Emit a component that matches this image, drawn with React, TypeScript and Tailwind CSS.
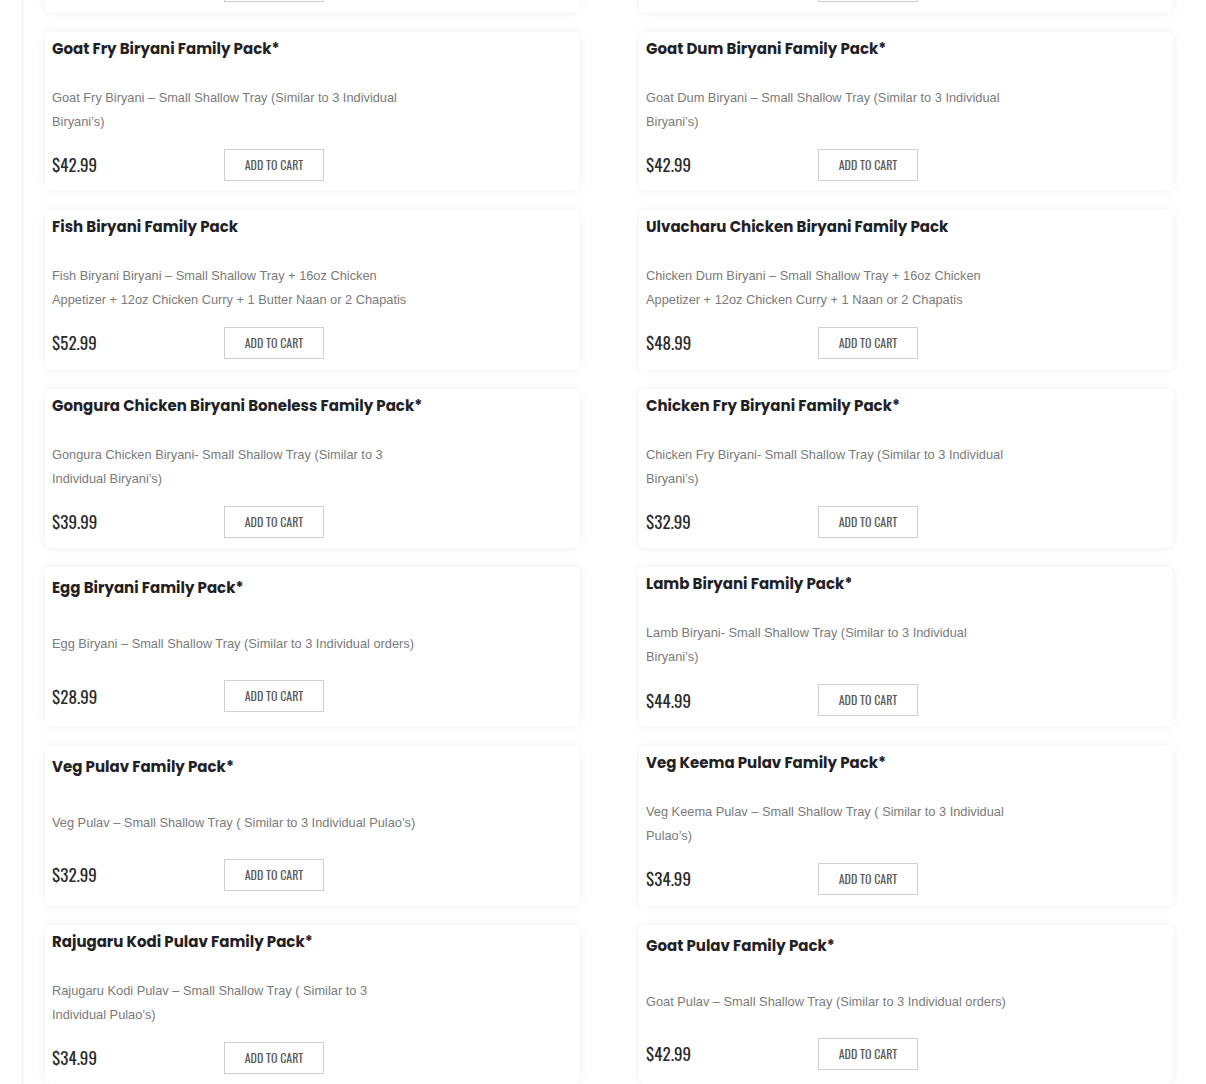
import React from 'react';

type Item = { title: string; desc: string; price: string; lines: 1 | 2 };

const items: Item[] = [
  { title: 'Chicken Dum Biryani Family Pack*', desc: 'Chicken Dum Biryani – Small Shallow Tray (Similar to 3 Individual Biryani’s)', price: '$39.99', lines: 2 },
  { title: 'Chicken 65 Biryani Family Pack*', desc: 'Chicken 65 Biryani – Small Shallow Tray (Similar to 3 Individual Biryani’s)', price: '$39.99', lines: 2 },
  { title: 'Goat Fry Biryani Family Pack*', desc: 'Goat Fry Biryani – Small Shallow Tray (Similar to 3 Individual Biryani’s)', price: '$42.99', lines: 2 },
  { title: 'Goat Dum Biryani Family Pack*', desc: 'Goat Dum Biryani – Small Shallow Tray (Similar to 3 Individual Biryani’s)', price: '$42.99', lines: 2 },
  { title: 'Fish Biryani Family Pack', desc: 'Fish Biryani Biryani – Small Shallow Tray + 16oz Chicken Appetizer + 12oz Chicken Curry + 1 Butter Naan or 2 Chapatis', price: '$52.99', lines: 2 },
  { title: 'Ulvacharu Chicken Biryani Family Pack', desc: 'Chicken Dum Biryani – Small Shallow Tray + 16oz Chicken Appetizer + 12oz Chicken Curry + 1 Naan or 2 Chapatis', price: '$48.99', lines: 2 },
  { title: 'Gongura Chicken Biryani Boneless Family Pack*', desc: 'Gongura Chicken Biryani- Small Shallow Tray (Similar to 3 Individual Biryani’s)', price: '$39.99', lines: 2 },
  { title: 'Chicken Fry Biryani Family Pack*', desc: 'Chicken Fry Biryani- Small Shallow Tray (Similar to 3 Individual Biryani’s)', price: '$32.99', lines: 2 },
  { title: 'Egg Biryani Family Pack*', desc: 'Egg Biryani – Small Shallow Tray (Similar to 3 Individual orders)', price: '$28.99', lines: 1 },
  { title: 'Lamb Biryani Family Pack*', desc: 'Lamb Biryani- Small Shallow Tray (Similar to 3 Individual Biryani’s)', price: '$44.99', lines: 2 },
  { title: 'Veg Pulav Family Pack*', desc: 'Veg Pulav – Small Shallow Tray ( Similar to 3 Individual Pulao’s)', price: '$32.99', lines: 1 },
  { title: 'Veg Keema Pulav Family Pack*', desc: 'Veg Keema Pulav – Small Shallow Tray ( Similar to 3 Individual Pulao’s)', price: '$34.99', lines: 2 },
  { title: 'Rajugaru Kodi Pulav Family Pack*', desc: 'Rajugaru Kodi Pulav – Small Shallow Tray ( Similar to 3 Individual Pulao’s)', price: '$34.99', lines: 2 },
  { title: 'Goat Pulav Family Pack*', desc: 'Goat Pulav – Small Shallow Tray (Similar to 3 Individual orders)', price: '$42.99', lines: 1 },
];

function Card({ item }: { item: Item }) {
  return (
    <div className="flex flex-col justify-center bg-white rounded-md shadow-[0_0_10px_rgba(0,0,0,0.07)] px-[7px] pt-[7px] pb-[10.6px]">
      <h3 className="font-['Poppins','Inter',sans-serif] font-bold text-[15px] leading-[20px] text-[#1f2124]">
        {item.title}
      </h3>
      <p
        className={
          item.lines === 2
            ? "mt-[27px] mb-[15px] w-[368px] font-['Liberation_Sans',Arial,sans-serif] text-[12.8px] leading-[24px] text-[#7a7a7a]"
            : "mt-[34px] mb-[24px] w-[368px] font-['Liberation_Sans',Arial,sans-serif] text-[12.8px] leading-[24px] text-[#7a7a7a]"
        }
      >
        {item.desc}
      </p>
      <div className="flex items-center h-[32px]">
        <span className="w-[172px] font-['Oswald','Liberation_Sans_Narrow','DejaVu_Sans_Condensed',sans-serif] text-[17px] text-[#2a2a2a]">
          {item.price}
        </span>
        <button className="w-[100px] h-[32px] border border-[#cfcfcf] bg-white font-['Oswald','Liberation_Sans_Narrow','DejaVu_Sans_Condensed',sans-serif] text-[12px] uppercase text-[#5a5a5a]">
          Add to cart
        </button>
      </div>
    </div>
  );
}

export default function App() {
  return (
    <div className="bg-white w-[1206px] h-[1084px] overflow-hidden">
      <div className="ml-[22px] border-l border-[#eeeeee] pl-[22px] pr-[33px] min-h-[1300px]">
        <div className="grid grid-cols-[535px_534px] gap-x-[59px] gap-y-[19px] -mt-[147px]">
          {items.map((item, i) => (
            <Card key={i} item={item} />
          ))}
        </div>
      </div>
    </div>
  );
}
